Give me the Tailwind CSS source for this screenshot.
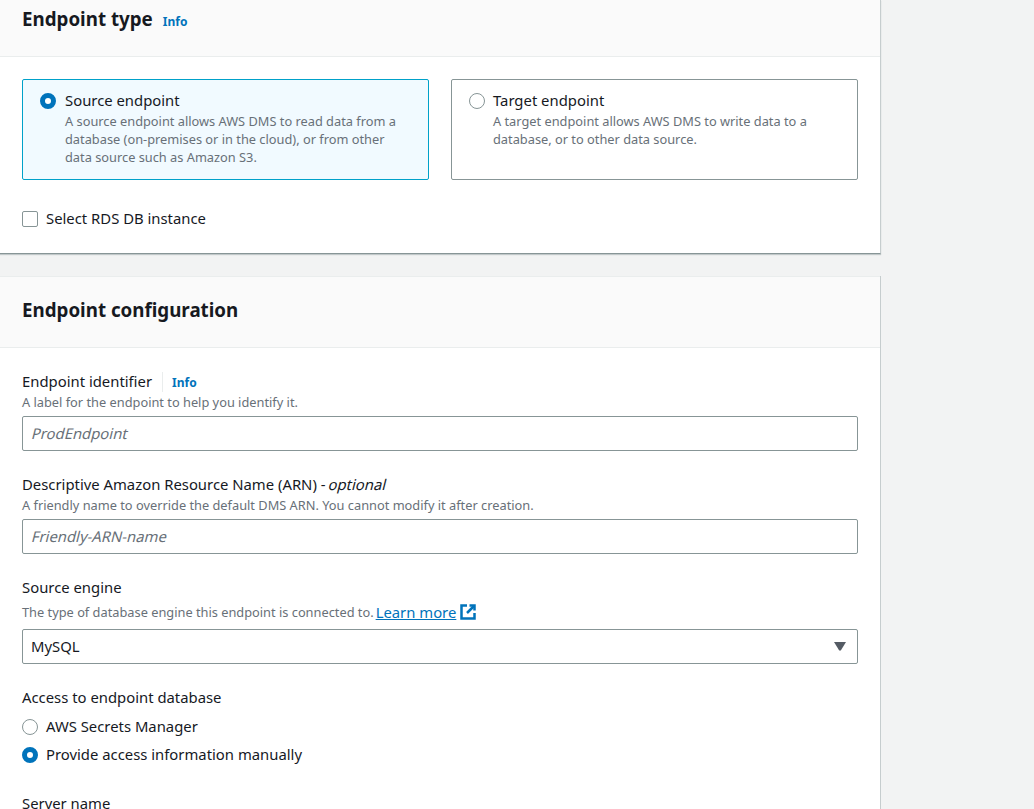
<!DOCTYPE html>
<html lang="en">
<head>
    <meta charset="UTF-8">
    <meta name="viewport" content="width=device-width, initial-scale=1.0">
    <title>Create endpoint</title>
    <script src="https://cdn.jsdelivr.net/npm/@tailwindcss/browser@4"></script>
</head>
<body class="bg-[#f2f3f3] h-[809px] overflow-hidden font-['Noto_Sans',sans-serif] text-[14.85px] leading-[20px] text-[#16191f]">
    <div class="w-[881px]">
        <!-- Endpoint type -->
        <section class="bg-white h-[254px] border-r border-[#c6cdce] border-b border-b-[#879596] shadow-[0_1px_1px_0_rgba(0,28,36,0.2)]">
            <div class="h-[57px] bg-[#fafafa] border-b border-[#eaeded] px-[22px] pt-[6px] flex items-start gap-[10px]">
                <h2 class="text-[18.75px] leading-[26px] font-bold">Endpoint type</h2>
                <a class="text-[12px] leading-[18px] mt-[7px] font-bold text-[#0073bb]">Info</a>
            </div>
            <div class="px-[22px] pt-[22px]">
                <div class="grid grid-cols-2 gap-[22px]">
                    <div class="h-[101px] bg-[#f1faff] border border-[#00a1c9] rounded-[2px] pl-[17px] pr-[16px] pt-[10px] flex gap-[9px]">
                        <span class="w-[16px] h-[16px] mt-[3px] shrink-0 rounded-full border-[5px] border-[#0073bb] bg-white"></span>
                        <div>
                            <div class="h-[22px]">Source endpoint</div>
                            <p class="text-[12.8px] leading-[18px] text-[#687078]">A source endpoint allows AWS DMS to read data from a database (on-premises or in the cloud), or from other data source such as Amazon S3.</p>
                        </div>
                    </div>
                    <div class="h-[101px] bg-white border border-[#879596] rounded-[2px] px-[17px] pt-[10px] flex gap-[8px]">
                        <span class="w-[16px] h-[16px] mt-[3px] shrink-0 rounded-full border border-[#879596] bg-white"></span>
                        <div>
                            <div class="h-[22px]">Target endpoint</div>
                            <p class="text-[12.8px] leading-[18px] text-[#687078]">A target endpoint allows AWS DMS to write data to a database, or to other data source.</p>
                        </div>
                    </div>
                </div>
                <label class="flex items-center gap-[8px] mt-[28px]">
                    <span class="w-[16px] h-[16px] rounded-[2px] border border-[#879596] bg-white"></span>
                    <span class="h-[22px]">Select RDS DB instance</span>
                </label>
            </div>
        </section>

        <!-- Endpoint configuration -->
        <section class="mt-[22px] bg-white h-[533px] border-r border-[#c6cdce]">
            <div class="h-[72px] bg-[#fafafa] border-t border-b border-[#eaeded] px-[22px] pt-[20px]">
                <h2 class="text-[18.75px] leading-[26px] font-bold">Endpoint configuration</h2>
            </div>
            <div class="px-[22px] pt-[23px]">
                <div class="flex items-center h-[22px]">
                    <span class="h-[22px]">Endpoint identifier</span>
                    <span class="ml-[10px] h-[20px] border-l border-[#eaeded]"></span>
                    <a class="ml-[9px] mt-[2px] text-[12px] font-bold text-[#0073bb]">Info</a>
                </div>
                <p class="text-[12.8px] leading-[18px] text-[#687078]">A label for the endpoint to help you identify it.</p>
                <div class="mt-[5px] h-[35px] border border-[#879596] rounded-[2px] px-[9px] flex items-center text-[#687078]"><span class="inline-block skew-x-[-14deg] pb-[2px]">ProdEndpoint</span></div>

                <div class="mt-[23px] h-[22px]">Descriptive Amazon Resource Name (ARN) - <span class="inline-block skew-x-[-14deg]">optional</span></div>
                <p class="text-[12.8px] leading-[18px] text-[#687078]">A friendly name to override the default DMS ARN. You cannot modify it after creation.</p>
                <div class="mt-[5px] h-[35px] border border-[#879596] rounded-[2px] px-[9px] flex items-center text-[#687078]"><span class="inline-block skew-x-[-14deg] pb-[2px]">Friendly-ARN-name</span></div>

                <div class="mt-[23px] h-[22px]">Source engine</div>
                <div class="mt-[2px] h-[22px] text-[12.8px] text-[#687078] flex items-center">The type of database engine this endpoint is connected to.
                    <a class="ml-[2px] text-[14.85px] text-[#0073bb] underline">Learn more</a>
                    <svg class="ml-[4px]" width="16" height="16" viewBox="0 0 16 16" fill="none" stroke="#0073bb" stroke-width="2.5"><path d="M7 1.5H1.5v13H14.5V9"/><path d="M9.5 1.5H14.5V6.5"/><path d="M14 2L7 9"/></svg>
                </div>
                <div class="mt-[6px] h-[35px] border border-[#879596] rounded-[2px] pl-[8px] pr-[11px] flex items-center justify-between">
                    <span class="pb-[2px]">MySQL</span>
                    <svg width="12" height="9" viewBox="0 0 12 9"><path d="M0 0H12L6.8 8.5H5.2Z" fill="#545b64"/></svg>
                </div>

                <div class="mt-[23px] h-[22px]">Access to endpoint database</div>
                <div class="mt-[7px] flex items-center gap-[8px]">
                    <span class="w-[16px] h-[16px] rounded-full border border-[#879596] bg-white"></span>
                    <span class="h-[22px]">AWS Secrets Manager</span>
                </div>
                <div class="mt-[6px] flex items-center gap-[8px]">
                    <span class="w-[16px] h-[16px] rounded-full border-[5px] border-[#0073bb] bg-white"></span>
                    <span class="h-[22px]">Provide access information manually</span>
                </div>

                <div class="mt-[27px]">Server name</div>
            </div>
        </section>
    </div>
</body>
</html>
